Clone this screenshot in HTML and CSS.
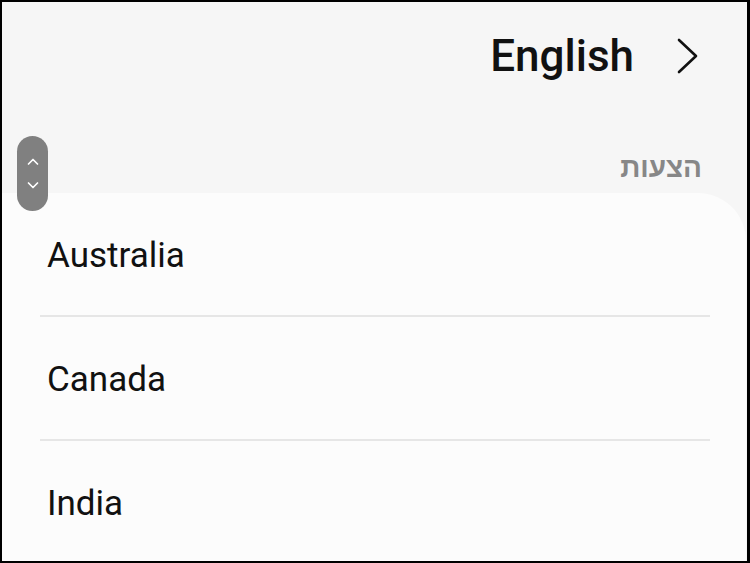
FILE: index.html
```html
<!DOCTYPE html>
<html lang="en">
<head>
    <meta charset="UTF-8">
    <meta name="viewport" content="width=device-width, initial-scale=1.0">
    <title>Language - Suggestions</title>
    <link rel="stylesheet" href="styles.css">
</head>
<body>
    <div class="screen">
        <div class="top">
            <div class="lang-row">
                <span class="lang">English</span>
                <svg class="chevron" width="24" height="38" viewBox="0 0 24 38">
                    <path d="M3 3 L20 19 L3 35" fill="none" stroke="#111" stroke-width="2.6" stroke-linecap="round" stroke-linejoin="round"/>
                </svg>
            </div>
            <div class="section-title" dir="rtl">הצעות</div>
        </div>

        <div class="card">
            <ul class="list">
                <li>Australia</li>
                <li>Canada</li>
                <li>India</li>
            </ul>
        </div>

        <div class="scroller">
            <svg width="14" height="9" viewBox="0 0 14 9">
                <path d="M2.5 7 L7 2.5 L11.5 7" fill="none" stroke="#fff" stroke-width="1.7" stroke-linecap="round" stroke-linejoin="round"/>
            </svg>
            <svg width="14" height="9" viewBox="0 0 14 9">
                <path d="M2.5 2 L7 6.5 L11.5 2" fill="none" stroke="#fff" stroke-width="1.7" stroke-linecap="round" stroke-linejoin="round"/>
            </svg>
        </div>
    </div>
</body>
</html>
```

FILE: styles.css
```css
body {
    margin: 0;
    padding: 0;
    font-family: Roboto, "Liberation Sans", sans-serif;
}
.screen {
    position: relative;
    width: 750px;
    height: 563px;
    box-sizing: border-box;
    border: 2px solid #000;
    border-right-width: 3px;
    background-color: #f6f6f6;
    overflow: hidden;
    display: flex;
    flex-direction: column;
}
.top {
    height: 191px;
    flex-shrink: 0;
    display: flex;
    flex-direction: column;
}
.lang-row {
    display: flex;
    justify-content: flex-end;
    align-items: center;
    padding: 28px 47px 0 0;
    height: 52px;
}
.lang {
    font-size: 44px;
    font-weight: 500;
    line-height: 52px;
    color: #111;
}
.chevron {
    margin-left: 42px;
}
.section-title {
    margin-top: 70px;
    padding-right: 45px;
    font-family: "Liberation Sans", "DejaVu Sans", sans-serif;
    font-size: 28px;
    font-weight: bold;
    line-height: 32px;
    color: #878787;
}
.card {
    flex: 1;
    margin-right: 1px;
    background-color: #fcfcfc;
    border-top-right-radius: 48px;
}
.list {
    list-style: none;
    margin: 0;
    padding: 0 36px 0 38px;
}
.list li {
    height: 120px;
    padding-top: 2px;
    display: flex;
    align-items: center;
    padding-left: 7px;
    font-size: 35px;
    color: #111;
    border-bottom: 2px solid #e6e6e6;
}
.scroller {
    position: absolute;
    left: 15px;
    top: 134px;
    width: 31px;
    height: 75px;
    border-radius: 16px;
    background-color: #808080;
    display: flex;
    flex-direction: column;
    align-items: center;
    justify-content: center;
    gap: 15px;
}
```
